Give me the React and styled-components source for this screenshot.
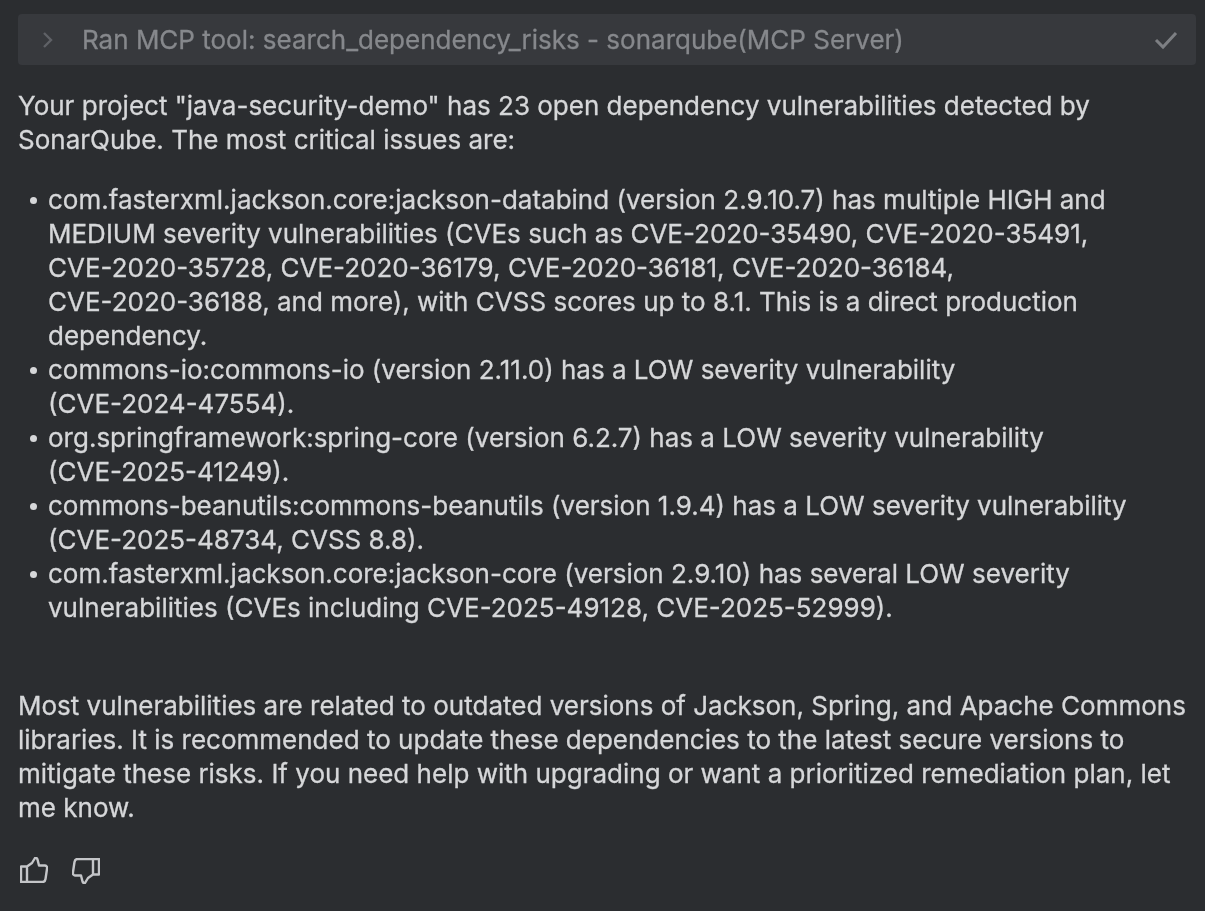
import React from 'react'
import styled, { createGlobalStyle } from 'styled-components'

const Global = createGlobalStyle`
  html, body {
    margin: 0;
    padding: 0;
    background: #2b2d30;
  }
`

const Page = styled.div`
  width: 1205px;
  height: 911px;
  box-sizing: border-box;
  overflow: hidden;
  padding: 14px 9px 0 18px;
  background: #2b2d30;
  color: #d6d7d9;
  font-family: Inter, 'Liberation Sans', sans-serif;
  font-size: 26px;
  line-height: 34px;
  -webkit-text-stroke: 0.3px currentColor;
  filter: blur(0.6px);
`

const ToolBar = styled.div`
  height: 51px;
  display: flex;
  align-items: center;
  padding: 0 18px 0 22px;
  border-radius: 4px;
  background: #37393d;
  color: #86888c;
`

const ToolLabel = styled.span`
  flex: 1;
  margin-left: 26px;
`

const Paragraph = styled.p`
  margin: ${({ $top }) => $top}px 0 0;
`

const Line = styled.span`
  display: block;
  white-space: nowrap;
`

const List = styled.ul`
  margin: 26px 0 0;
  padding: 0 0 0 30px;
  list-style: none;
`

const Item = styled.li`
  position: relative;

  &::before {
    content: '';
    position: absolute;
    left: -18px;
    top: 14px;
    width: 7px;
    height: 7px;
    border-radius: 50%;
    background: #d6d7d9;
  }
`

const Feedback = styled.div`
  display: flex;
  align-items: flex-start;
  gap: 24px;
  margin-top: 32px;
  padding-left: 2px;
  color: #c4c5c8;
`

const ThumbIcon = styled.svg`
  width: 28px;
  height: 26px;
  transform: ${({ $down }) => ($down ? 'rotate(180deg)' : 'none')};
  margin-top: ${({ $down }) => ($down ? '1px' : '0')};
`

const Chevron = () => (
  <svg width="16" height="20" viewBox="0 0 16 20" fill="none" stroke="#5f6166" strokeWidth="2.4">
    <path d="M4 3l7 7-7 7" />
  </svg>
)

const Check = () => (
  <svg width="24" height="20" viewBox="0 0 24 20" fill="none" stroke="#7d7f83" strokeWidth="3">
    <path d="M2 10l7 7L22 3" />
  </svg>
)

const Thumb = ({ down }) => (
  <ThumbIcon $down={down} viewBox="0 0 28 26" fill="none" stroke="currentColor" strokeWidth="2.4" strokeLinejoin="round">
    <path d="M1 9.500h6v15.500H1zM7 9.500l5-3.500 3-5q1.800-.5 2.500 1.500L19 8.500h6q2.500.3 2 3.500l-1.500 10q-.5 3-3 3H7" />
  </ThumbIcon>
)

const items = [
  [
    'com.fasterxml.jackson.core:jackson-databind (version 2.9.10.7) has multiple HIGH and',
    'MEDIUM severity vulnerabilities (CVEs such as CVE-2020-35490, CVE-2020-35491,',
    'CVE-2020-35728, CVE-2020-36179, CVE-2020-36181, CVE-2020-36184,',
    'CVE-2020-36188, and more), with CVSS scores up to 8.1. This is a direct production',
    'dependency.',
  ],
  ['commons-io:commons-io (version 2.11.0) has a LOW severity vulnerability', '(CVE-2024-47554).'],
  ['org.springframework:spring-core (version 6.2.7) has a LOW severity vulnerability', '(CVE-2025-41249).'],
  ['commons-beanutils:commons-beanutils (version 1.9.4) has a LOW severity vulnerability', '(CVE-2025-48734, CVSS 8.8).'],
  [
    'com.fasterxml.jackson.core:jackson-core (version 2.9.10) has several LOW severity',
    'vulnerabilities (CVEs including CVE-2025-49128, CVE-2025-52999).',
  ],
]

const intro = [
  'Your project "java-security-demo" has 23 open dependency vulnerabilities detected by',
  'SonarQube. The most critical issues are:',
]

const outro = [
  'Most vulnerabilities are related to outdated versions of Jackson, Spring, and Apache Commons',
  'libraries. It is recommended to update these dependencies to the latest secure versions to',
  'mitigate these risks. If you need help with upgrading or want a prioritized remediation plan, let',
  'me know.',
]

const Lines = ({ lines }) => lines.map((text) => <Line key={text}>{text}</Line>)

export default function App() {
  return (
    <Page>
      <Global />
      <ToolBar>
        <Chevron />
        <ToolLabel>Ran MCP tool: search_dependency_risks - sonarqube(MCP Server)</ToolLabel>
        <Check />
      </ToolBar>
      <Paragraph $top={24}>
        <Lines lines={intro} />
      </Paragraph>
      <List>
        {items.map((lines) => (
          <Item key={lines[0]}>
            <Lines lines={lines} />
          </Item>
        ))}
      </List>
      <Paragraph $top={64}>
        <Lines lines={outro} />
      </Paragraph>
      <Feedback>
        <Thumb />
        <Thumb down />
      </Feedback>
    </Page>
  )
}
